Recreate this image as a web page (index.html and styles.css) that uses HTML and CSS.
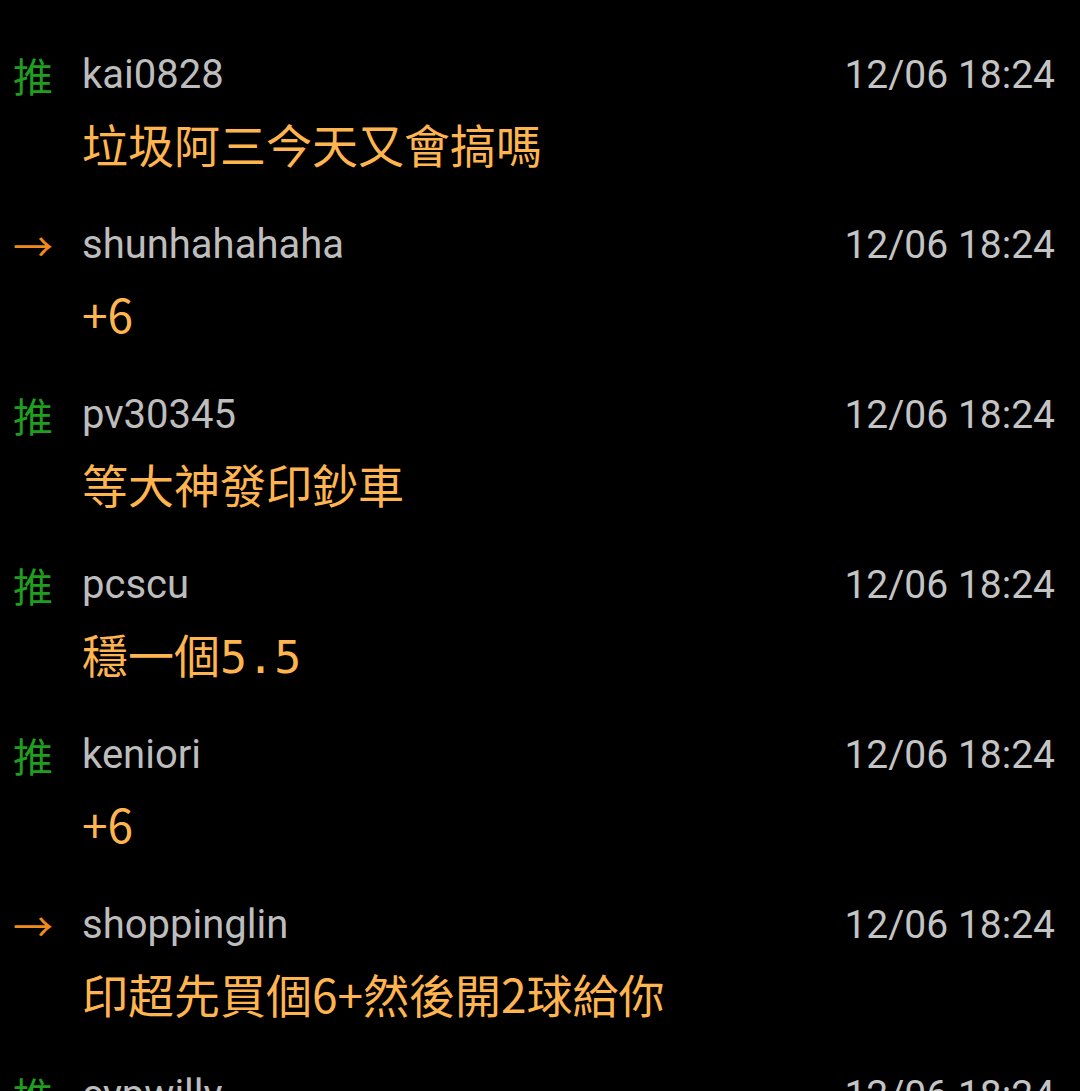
FILE: index.html
```html
<!DOCTYPE html>
<html lang="zh-Hant">
<head>
<meta charset="utf-8">
<link rel="stylesheet" href="styles.css">
</head>
<body>
<div class="list">
  <div class="push">
    <div class="head"><span class="tag up">推</span><span class="user">kai0828</span><span class="time">12/06 18:24</span></div>
    <div class="text">垃圾阿三今天又會搞嗎</div>
  </div>
  <div class="push">
    <div class="head"><span class="tag arrow">→</span><span class="user">shunhahahaha</span><span class="time">12/06 18:24</span></div>
    <div class="text">+6</div>
  </div>
  <div class="push">
    <div class="head"><span class="tag up">推</span><span class="user">pv30345</span><span class="time">12/06 18:24</span></div>
    <div class="text">等大神發印鈔車</div>
  </div>
  <div class="push">
    <div class="head"><span class="tag up">推</span><span class="user">pcscu</span><span class="time">12/06 18:24</span></div>
    <div class="text">穩一個<span class="mono">5.5</span></div>
  </div>
  <div class="push">
    <div class="head"><span class="tag up">推</span><span class="user">keniori</span><span class="time">12/06 18:24</span></div>
    <div class="text">+6</div>
  </div>
  <div class="push">
    <div class="head"><span class="tag arrow">→</span><span class="user">shoppinglin</span><span class="time">12/06 18:24</span></div>
    <div class="text">印超先買個6+然後開2球給你</div>
  </div>
  <div class="push">
    <div class="head"><span class="tag up">推</span><span class="user">cypwilly</span><span class="time">12/06 18:24</span></div>
    <div class="text">&nbsp;</div>
  </div>
</div>
</body>
</html>
```
FILE: styles.css
```css
html, body {
  margin: 0;
  padding: 0;
  background: #000;
  height: 100%;
  overflow: hidden;
}
.list {
  padding-top: 47px;
}
.push {
  padding-bottom: 42px;
}
.head {
  display: flex;
  align-items: center;
  height: 56px;
  padding-left: 13px;
  padding-right: 25px;
}
.tag {
  width: 69px;
  flex: none;
  font-family: "Noto Sans CJK TC", sans-serif;
  font-size: 40px;
  line-height: 56px;
}
.up { color: #1f9e1f; }
.arrow { color: #f08a1c; }
.user {
  flex: 1;
  font-family: Roboto, sans-serif;
  font-size: 40px;
  line-height: 56px;
  color: #bdbdbd;
}
.time {
  font-family: Roboto, sans-serif;
  font-size: 39px;
  line-height: 56px;
  color: #c4c4c4;
}
.text {
  margin-top: 8px;
  padding-left: 82px;
  height: 64px;
  font-family: "Noto Sans CJK TC", sans-serif;
  font-size: 46px;
  line-height: 64px;
  color: #ffb54f;
}
.mono {
  font-family: "DejaVu Sans Mono", monospace;
  font-size: 45px;
}
```
